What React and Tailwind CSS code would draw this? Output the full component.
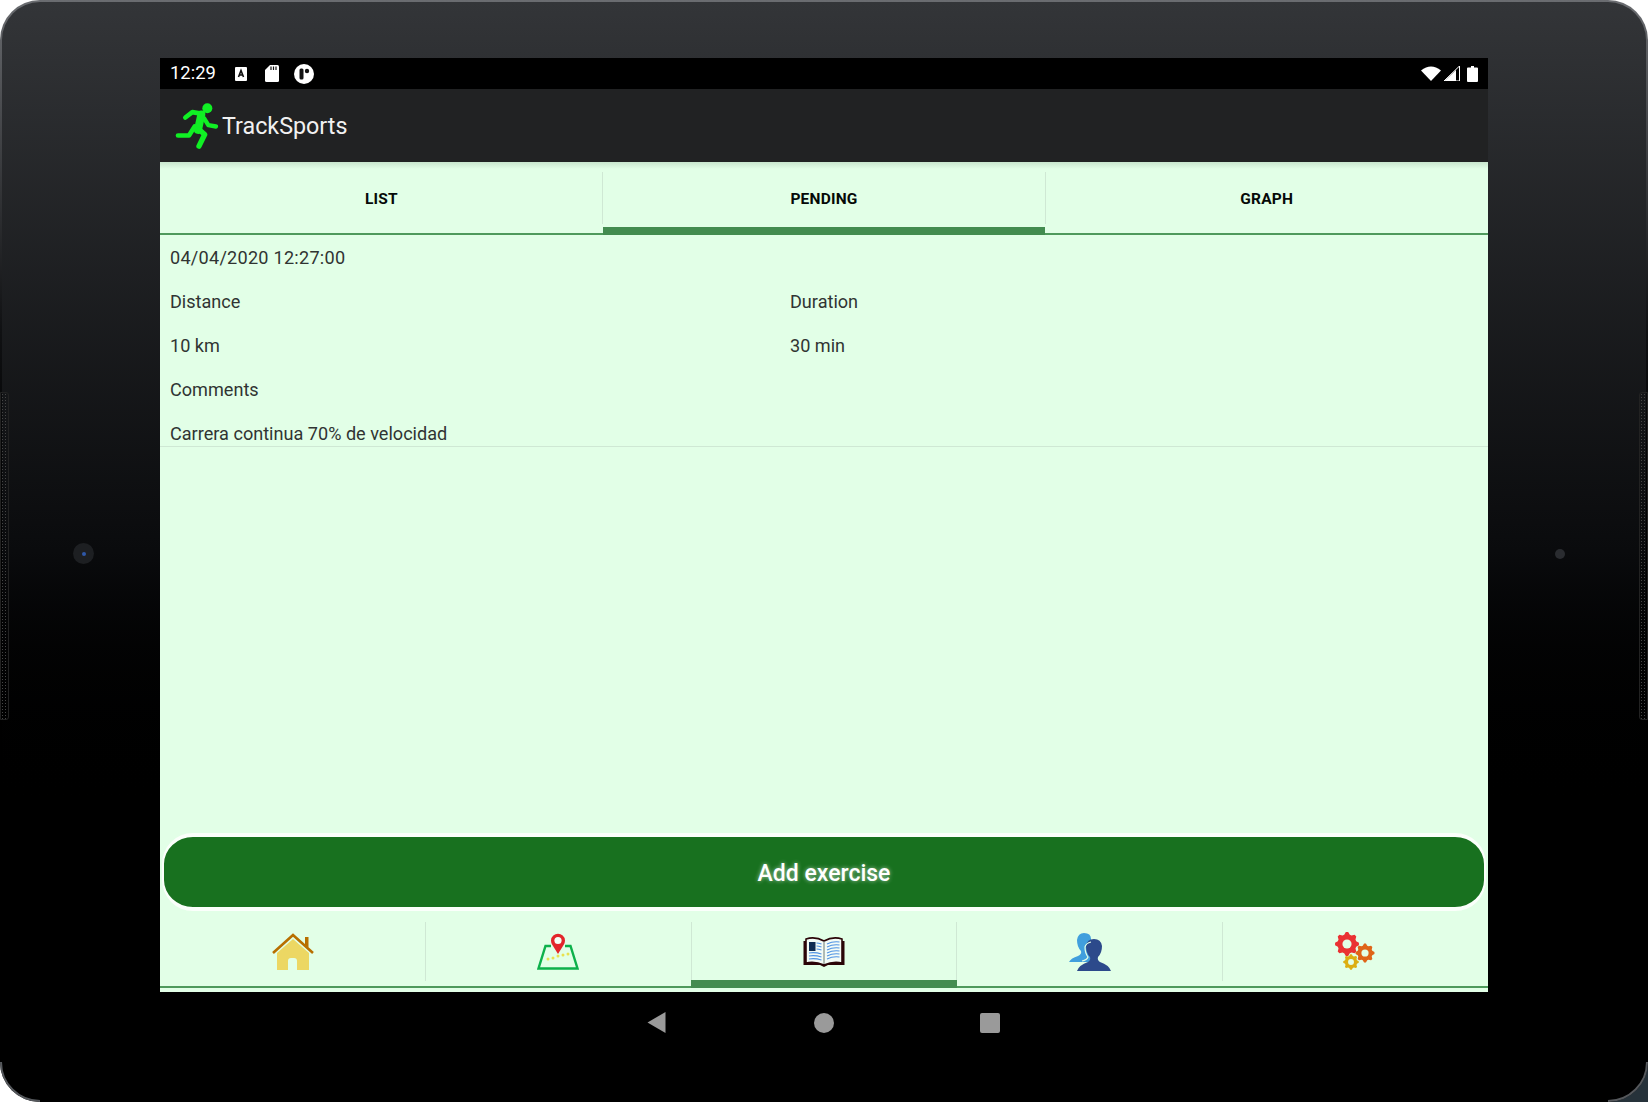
import React from "react";

const Runner = () => (
  <svg width="45" height="47" viewBox="70 155 135 140" fill="none" stroke="#10f024" strokeWidth="13" strokeLinecap="round" strokeLinejoin="round">
    <circle cx="170" cy="173" r="15" fill="#10f024" stroke="none" />
    <path d="M104 201 L125 185 L155 190" strokeWidth="14" />
    <path d="M152 192 L142 238" strokeWidth="24" />
    <path d="M160 203 L173 224 L196 228" />
    <path d="M146 238 L162 252 L145 287" strokeWidth="16" />
    <path d="M82 255 L115 255 L132 228" strokeWidth="14" />
  </svg>
);

const Gear = ({ x, y, r, color }) => {
  const teeth = 8;
  const pts = [];
  for (let i = 0; i < teeth * 4; i++) {
    const a = ((i - 0.5) / (teeth * 4)) * Math.PI * 2;
    const rad = i % 4 < 2 ? r : r * 0.8;
    pts.push(`${(x + Math.cos(a) * rad).toFixed(2)},${(y + Math.sin(a) * rad).toFixed(2)}`);
  }
  return (
    <g>
      <polygon points={pts.join(" ")} fill={color} />
      <circle cx={x} cy={y} r={r * 0.38} fill="#e2ffe7" />
    </g>
  );
};

const Home = () => (
  <svg width="42" height="37" viewBox="0 0 42 37" className="-mt-[2px]">
    <path d="M5 20 L21 6 L37 20 V37 H5 Z" fill="#ecd763" />
    <path d="M16 37 V28 Q16 25 19 25 H22 Q25 25 25 28 V37 Z" fill="#e2ffe7" />
    <rect x="33" y="4" width="3.5" height="10" fill="#b86f00" />
    <path d="M1 20 L21 2 L41 20" fill="none" stroke="#b86f00" strokeWidth="2.6" />
  </svg>
);

const MapPin = () => (
  <svg width="42" height="37" viewBox="0 0 42 37" className="-mt-[2px]">
    <path d="M14 13 H8.5 L1.5 35.5 H40.5 L33.5 13 H28" fill="none" stroke="#0db14b" strokeWidth="2.4" />
    {[[11, 26], [16, 25], [21, 23], [26, 22], [31, 21]].map(([x, y]) => (
      <circle key={x} cx={x} cy={y} r="1.5" fill="#e9e14e" />
    ))}
    <path d="M21 21 L15.4 12 A7 7 0 1 1 26.6 12 Z" fill="#e3262b" />
    <circle cx="21" cy="7.5" r="3.6" fill="#f4fff6" />
  </svg>
);

const Book = () => (
  <svg width="42" height="31" viewBox="0 0 42 31" className="-mt-[2px]">
    <path d="M0.5 5 H3 V27 H18 L21 28 L24 27 H39 V5 H41.5 V29 H25 L21 31 L17 29 H0.5 Z" fill="#2b0508" />
    <path d="M3 3 Q12 0 21 5 Q30 0 39 3 V27 Q30 25 21 29 Q12 25 3 27 Z" fill="#f3fbf6" stroke="#2b0508" strokeWidth="1.6" />
    <path d="M21 5 V28" stroke="#6c7a72" strokeWidth="1" />
    <rect x="6" y="6" width="6.5" height="9" fill="#0f2c52" />
    <g fill="none" stroke="#4f93e4" strokeWidth="1.1">
      <path d="M13.5 7 Q15.5 7 18.5 8 M13.5 10 Q15.5 10 18.5 11 M13.5 13 Q15.5 13 18.5 14" />
      <path d="M6 17 Q12 16 18.5 18 M6 20 Q12 19 18.5 21 M6 23 Q12 22 18.5 24" />
      <path d="M24 8 Q30 5 36.5 6 M24 11 Q30 8 36.5 9 M24 14 Q30 11 36.5 12 M24 17 Q30 14 36.5 15 M24 20 Q30 17 36.5 18 M24 23 Q30 20 36.5 21" />
    </g>
  </svg>
);

const Users = () => (
  <svg width="42" height="38" viewBox="0 0 42 38">
    <path d="M0 29 Q2 25 9 23 Q13 21 12 18 Q8 14 8 7 Q9 0 15 0 Q22 0 22 6 L22 29 Z" fill="#409fdd" />
    <path d="M8 38 Q10 32 19 29 Q22 27 21 24 Q17 20 17 13 Q18 6 25 6 Q32 6 33 13 Q33 20 29 24 Q28 27 31 29 Q40 32 42 38 Z" fill="#2c4a8b" />
    <path d="M22 9 Q17 10 16 14 Q16 20 19 24 Q18 27 13 28" fill="none" stroke="#e2ffe7" strokeWidth="1.2" />
  </svg>
);

const Gears = () => (
  <svg width="40" height="40" viewBox="0 0 40 40">
    <Gear x={12} y={12} r={12} color="#ea3233" />
    <Gear x={30} y={21} r={9.5} color="#df6418" />
    <Gear x={16} y={30} r={7.8} color="#dcae12" />
  </svg>
);

const Tab = ({ label, active, last }) => (
  <div className="relative flex-1 h-full flex items-center justify-center">
    <span className="text-[15.5px] font-bold tracking-[0.2px] text-[#060a08] mt-[3px]">{label}</span>
    {!last && <div className="absolute right-[-0.5px] top-[10px] h-[52px] w-px bg-[#cfe8d4]" />}
    {active
      ? <div className="absolute left-0 right-0 bottom-0 h-[8px] bg-[#438c50]" />
      : <div className="absolute left-0 right-0 bottom-0 h-[2px] bg-[#4f9a5c]" />}
  </div>
);

const NavItem = ({ children, active, last }) => (
  <div className="relative flex-1 h-full flex justify-center pt-[10px]">
    <div className="h-[40px] flex items-center justify-center">{children}</div>
    {!last && <div className="absolute right-[-0.5px] top-0 h-[59px] w-px bg-[#cfe8d4]" />}
    {active
      ? <div className="absolute left-0 right-0 bottom-[4px] h-[8px] bg-[#438c50]" />
      : <div className="absolute left-0 right-0 bottom-[4px] h-[2px] bg-[#4f9a5c]" />}
  </div>
);

const Row = ({ children }) => <div className="h-[44px] flex items-center">{children}</div>;

export default function App() {
  return (
    <div className="relative w-[1648px] h-[1102px] overflow-hidden bg-white" style={{ fontFamily: "Roboto, sans-serif" }}>
      <div className="absolute right-0 bottom-0 w-[40px] h-[40px] bg-[#26323a]" />
      <div className="relative w-full h-full rounded-[40px] p-[2px] bg-gradient-to-b from-[#6a6c70] via-[#101113] via-30% to-black to-60%">
        <div className="relative w-full h-full rounded-[38px] bg-gradient-to-b from-[#333538] via-[#0a0b0d] via-50% to-black to-75% pt-[56px] pl-[158px]">
          <div className="absolute -left-[2px] top-[390px] w-[9px] h-[328px] rounded-r-[3px] border border-[#222] bg-[radial-gradient(#454545_1px,transparent_1px)] bg-[length:3px_3px]" />
          <div className="absolute -right-[2px] top-[390px] w-[9px] h-[328px] rounded-l-[3px] border border-[#222] bg-[radial-gradient(#454545_1px,transparent_1px)] bg-[length:3px_3px]" />
          <div className="absolute left-[71px] top-[541px] w-[21px] h-[21px] rounded-full bg-[#1d1f22] flex items-center justify-center">
            <div className="w-[4px] h-[4px] rounded-full bg-[#2f58a8]" />
          </div>
          <div className="absolute right-[81px] top-[547px] w-[10px] h-[10px] rounded-full bg-[#2a2c30]" />

          <div className="w-[1328px] h-[934px] flex flex-col">
            <div className="h-[31px] bg-black flex items-center pl-[10px] pr-[11px] text-white shrink-0">
              <span className="text-[18.4px] w-[65px] leading-none">12:29</span>
              <svg width="12" height="14" viewBox="0 0 12 14" className="mr-[18px]">
                <rect width="12" height="14" rx="1" fill="#fff" />
                <path d="M3.5 10 L6 3.5 L8.5 10 M4.5 8 H7.5" stroke="#111" strokeWidth="1.6" fill="none" />
              </svg>
              <svg width="14" height="17" viewBox="0 0 14 17" className="mr-[15px]">
                <path d="M5 0 H12.5 Q14 0 14 1.5 V15.5 Q14 17 12.5 17 H1.5 Q0 17 0 15.5 V5 Z" fill="#fff" />
                <path d="M6 1.5 V5 M8.5 1.5 V5 M11 1.5 V5" stroke="#111" strokeWidth="1.2" />
              </svg>
              <svg width="20" height="20" viewBox="0 0 20 20">
                <circle cx="10" cy="10" r="10" fill="#fff" />
                <rect x="5.5" y="4.5" width="4" height="11" rx="1.5" fill="#111" />
                <circle cx="13" cy="7" r="2.2" fill="#111" />
              </svg>
              <div className="ml-auto flex items-center gap-[3px] -mr-[1px]">
                <svg width="20" height="15" viewBox="0 0 20 15"><path d="M0 4.5 Q10 -3.5 20 4.5 L10 15 Z" fill="#fff" /></svg>
                <svg width="16" height="15" viewBox="0 0 16 15"><path d="M15.5 0 V15 H0 Z" fill="none" stroke="#fff" strokeWidth="1" /><path d="M12 4 V15 H0.5 Z" fill="#fff" /></svg>
                <svg width="11" height="16" viewBox="0 0 11 16" className="ml-[4px]"><path d="M3 1.5 H4 V0 H7 V1.5 H10 Q11 1.5 11 2.5 V15 Q11 16 10 16 H1 Q0 16 0 15 V2.5 Q0 1.5 1 1.5 Z" fill="#fff" /></svg>
              </div>
            </div>

            <div className="h-[73px] bg-[#212223] flex items-center pl-[14px] shrink-0">
              <Runner />
              <span className="text-[23.3px] text-[#f1f1f1] ml-[3px] leading-none mt-[3px]">TrackSports</span>
            </div>

            <div className="relative flex-1 flex flex-col bg-[#e2ffe7] min-h-0">
              <div className="h-[73px] flex shrink-0">
                <Tab label="LIST" />
                <Tab label="PENDING" active />
                <Tab label="GRAPH" last />
              </div>
              <div className="absolute left-0 right-0 top-0 h-[7px] bg-gradient-to-b from-[#c9e6ce] to-transparent" />

              <div className="h-[212px] border-b border-[#cfe8d4] pl-[10px] text-[18.1px] text-[#303432] pt-px shrink-0 overflow-hidden">
                <Row><span className="tracking-[0.25px]">04/04/2020 12:27:00</span></Row>
                <Row><span className="w-[620px]">Distance</span><span>Duration</span></Row>
                <Row><span className="w-[620px]">10 km</span><span>30 min</span></Row>
                <Row>Comments</Row>
                <Row>Carrera continua 70% de velocidad</Row>
              </div>

              <div className="flex-1" />

              <div className="px-[2px] shrink-0">
                <div className="h-[78px] rounded-[31px] border-y-[4px] border-x-[2px] border-[#fbfffb] bg-[#18711f] flex items-center justify-center">
                  <span className="text-[23px] font-medium text-white mt-[4px] [text-shadow:0_0_4px_rgba(255,255,255,0.6)]">Add exercise</span>
                </div>
              </div>

              <div className="h-[81px] flex shrink-0 pt-[11px]">
                <NavItem><Home /></NavItem>
                <NavItem><MapPin /></NavItem>
                <NavItem active><Book /></NavItem>
                <NavItem><Users /></NavItem>
                <NavItem last><Gears /></NavItem>
              </div>
            </div>

            <div className="relative h-[0px]">
              <div className="absolute left-0 right-0 top-[20px] flex justify-center items-center -ml-[2px]">
                <svg width="19" height="21" viewBox="0 0 19 21" className="mr-[148px]"><path d="M18.5 0 V21 L0.5 10.5 Z" fill="#9a9a9a" /></svg>
                <div className="w-[20px] h-[20px] rounded-full bg-[#9a9a9a] mr-[146px]" />
                <div className="w-[20px] h-[20px] rounded-[2px] bg-[#9a9a9a]" />
              </div>
            </div>
          </div>
        </div>
      </div>
      <svg width="42" height="42" viewBox="0 0 42 42" className="absolute left-0 bottom-0" fill="none">
        <path d="M1 2 A39 39 0 0 0 40 41" stroke="#55585c" strokeWidth="2" />
      </svg>
      <svg width="42" height="42" viewBox="0 0 42 42" className="absolute right-0 bottom-0" fill="none">
        <path d="M41 2 A39 39 0 0 1 2 41" stroke="#55585c" strokeWidth="2" />
      </svg>
    </div>
  );
}
